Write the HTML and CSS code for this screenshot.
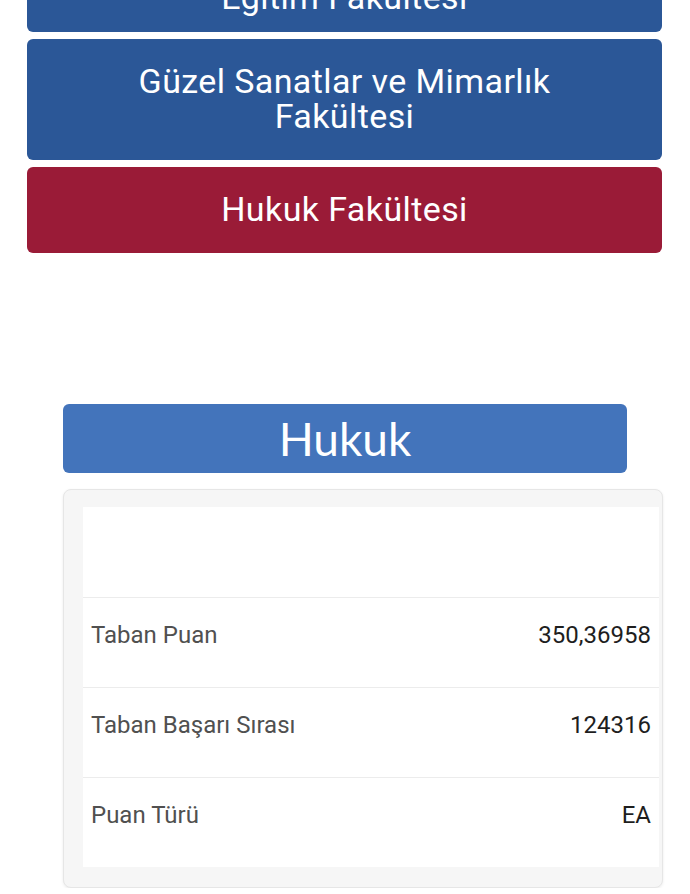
FILE: index.html
```html
<!DOCTYPE html>
<html lang="tr">

<head>
  <meta charset="UTF-8">
  <meta name="viewport" content="width=device-width, initial-scale=1.0">
  <title>Hukuk - Taban Puan</title>
  <link rel="stylesheet" href="styles.css">
</head>

<body>
  <div class="faculties">
    <a class="faculty blue first" href="#">Eğitim Fakültesi</a>
    <a class="faculty blue" href="#">Güzel Sanatlar ve Mimarlık Fakültesi</a>
    <a class="faculty red" href="#">Hukuk Fakültesi</a>
  </div>

  <div class="program">
    <h2 class="programTitle">Hukuk</h2>
    <div class="card">
      <table class="infoTable">
        <tbody>
          <tr class="emptyRow">
            <td></td>
            <td></td>
          </tr>
          <tr>
            <td class="label">Taban Puan</td>
            <td class="value">350,36958</td>
          </tr>
          <tr>
            <td class="label">Taban Başarı Sırası</td>
            <td class="value">124316</td>
          </tr>
          <tr>
            <td class="label">Puan Türü</td>
            <td class="value">EA</td>
          </tr>
        </tbody>
      </table>
    </div>
  </div>
</body>

</html>
```

FILE: styles.css
```css
body {
  margin: 0;
  background: #fff;
  font-family: Roboto, "Liberation Sans", sans-serif;
}

.faculties {
  display: flex;
  flex-direction: column;
  gap: 7px;
  padding: 0 28px 0 27px;
}

.faculty {
  display: block;
  padding: 25px 90px 26px;
  border-radius: 6px;
  color: #fff;
  text-align: center;
  text-decoration: none;
  font-size: 34px;
  letter-spacing: 0.4px;
  line-height: 35px;
}

.faculty.first {
  margin-top: -54px;
  padding-top: 34px;
  padding-bottom: 17px;
}

.blue {
  background-color: #2b5797;
}

.red {
  background-color: #9a1b37;
}

.program {
  padding: 151px 27px 0 63px;
}

.programTitle {
  width: 564px;
  height: 69px;
  margin: 0;
  border-radius: 6px;
  background-color: #4374bb;
  color: #fff;
  font-family: Lato, "Open Sans", sans-serif;
  font-weight: normal;
  font-size: 46px;
  line-height: 69px;
  text-align: center;
}

.card {
  margin-top: 16px;
  padding: 17px 3px 20px 19px;
  background: #f6f6f6;
  border: 1px solid #e6e6e6;
  border-radius: 8px;
  box-shadow: 0 1px 3px rgba(0, 0, 0, 0.08);
}

.infoTable {
  width: 100%;
  border-collapse: collapse;
  background: #fff;
}

.infoTable td {
  height: 90px;
  padding: 0 8px 14px;
  border-top: 1px solid #ececec;
  font-size: 24px;
  vertical-align: middle;
  box-sizing: border-box;
}

.emptyRow td {
  border-top: none;
}

.label {
  color: #505050;
}

.value {
  color: #1e1e1e;
  text-align: right;
}
```
